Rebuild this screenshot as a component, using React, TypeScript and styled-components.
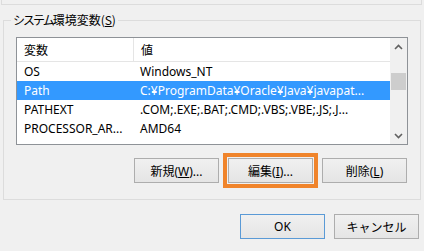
import React from 'react'
import styled, { createGlobalStyle } from 'styled-components'

const GlobalStyle = createGlobalStyle`
  html, body {
    margin: 0;
    padding: 0;
    background: #f0f0f0;
  }
  body {
    font-family: "Noto Sans", "Noto Sans CJK JP", sans-serif;
    font-size: 12px;
    color: #000;
  }
`

const Dialog = styled.div`
  width: 424px;
  height: 251px;
  overflow: hidden;
  background: #f0f0f0;
`

const TopFrame = styled.div`
  height: 4px;
  margin: 0 2px 0 1px;
  border: 1px solid #dcdcdc;
  border-top: none;
`

const GroupBox = styled.fieldset`
  margin: 7px 3px 0;
  padding: 9px 12px 16px;
  border: 1px solid #dcdcdc;
  min-width: 0;
`

const Legend = styled.legend`
  margin-left: -5px;
  padding: 0 2px;
  line-height: 16px;
  font-family: "Noto Sans CJK JP", sans-serif;
`

// Meiryo UI draws kana narrower than kanji
const Kana = styled.span`
  letter-spacing: -2px;
`

const ListBox = styled.div`
  height: 108px;
  box-sizing: border-box;
  border: 1px solid #8e9297;
  background: #fff;
  display: flex;
  overflow: hidden;
`

const ListBody = styled.div`
  flex: 1;
  display: flex;
  flex-direction: column;
  min-width: 0;
`

const Header = styled.div`
  display: flex;
  height: 24px;
  box-sizing: border-box;
  border-bottom: 1px solid #e5e5e5;
`

const HeaderCell = styled.div<{ $width?: number }>`
  ${({ $width }) => ($width ? `width: ${$width}px; border-right: 1px solid #e5e5e5;` : 'flex: 1;')}
  box-sizing: border-box;
  padding-left: 7px;
  line-height: 23px;
  font-family: "Noto Sans CJK JP", sans-serif;
`

const Row = styled.div<{ $selected?: boolean }>`
  display: flex;
  height: 19px;
  flex-shrink: 0;
  align-items: center;
  white-space: nowrap;
  background: ${({ $selected }) => ($selected ? '#3399ff' : 'transparent')};
  color: ${({ $selected }) => ($selected ? '#fff' : '#000')};
`

const NameCell = styled.div`
  width: 117px;
  box-sizing: border-box;
  padding-left: 7px;
  overflow: hidden;
`

const ValueCell = styled.div`
  flex: 1;
  padding-left: 6px;
  overflow: hidden;
`

const ScrollBar = styled.div`
  width: 17px;
  background: #f0f0f0;
  display: flex;
  flex-direction: column;
`

const ArrowBox = styled.div`
  height: 17px;
  display: flex;
  align-items: center;
  justify-content: center;
`

const Track = styled.div`
  flex: 1;
`

const Thumb = styled.div<{ $offset: number }>`
  margin: ${({ $offset }) => $offset}px 1px 0;
  height: 17px;
  background: #cdcdcd;
`

const ButtonRow = styled.div`
  display: flex;
  justify-content: flex-end;
  gap: 9px;
  margin-top: 13px;
  padding-right: 1px;
`

const DialogButtons = styled.div`
  display: flex;
  justify-content: flex-end;
  gap: 9px;
  margin: 14px 5px 0 0;
`

const Button = styled.button<{ $default?: boolean; $marked?: boolean }>`
  width: 85px;
  height: 25px;
  box-sizing: border-box;
  padding: 0;
  border: 1px solid ${({ $default }) => ($default ? '#5a9ad6' : '#adadad')};
  background: linear-gradient(#f0f0f0, #e5e5e5);
  font-family: "Noto Sans", "Noto Sans CJK JP", sans-serif;
  font-size: 12px;
  color: #000;
  ${({ $marked }) => ($marked ? 'outline: 4px solid #f0842b; outline-offset: 1px;' : '')}
`

const Chevron = ({ up }: { up?: boolean }) => (
  <svg width="9" height="6" viewBox="0 0 9 6">
    <polyline
      points={up ? '1,5 4.5,1.5 8,5' : '1,1 4.5,4.5 8,1'}
      fill="none"
      stroke="#606060"
      strokeWidth="1.6"
    />
  </svg>
)

const rows = [
  { name: 'OS', value: 'Windows_NT' },
  { name: 'Path', value: 'C:¥ProgramData¥Oracle¥Java¥javapat...', selected: true },
  { name: 'PATHEXT', value: '.COM;.EXE;.BAT;.CMD;.VBS;.VBE;.JS;.J...' },
  { name: 'PROCESSOR_AR...', value: 'AMD64' },
]

export default function App() {
  return (
    <Dialog>
      <GlobalStyle />
      <TopFrame />
      <GroupBox>
        <Legend>
          <Kana>システム</Kana>環境変数(<u>S</u>)
        </Legend>
        <ListBox>
          <ListBody>
            <Header>
              <HeaderCell $width={117}>変数</HeaderCell>
              <HeaderCell>値</HeaderCell>
            </Header>
            {rows.map((r) => (
              <Row key={r.name} $selected={r.selected}>
                <NameCell>{r.name}</NameCell>
                <ValueCell>{r.value}</ValueCell>
              </Row>
            ))}
          </ListBody>
          <ScrollBar>
            <ArrowBox>
              <Chevron up />
            </ArrowBox>
            <Track>
              <Thumb $offset={18} />
            </Track>
            <ArrowBox>
              <Chevron />
            </ArrowBox>
          </ScrollBar>
        </ListBox>
        <ButtonRow>
          <Button>
            新規(<u>W</u>)...
          </Button>
          <Button $marked>
            編集(<u>I</u>)...
          </Button>
          <Button>
            削除(<u>L</u>)
          </Button>
        </ButtonRow>
      </GroupBox>
      <DialogButtons>
        <Button $default>OK</Button>
        <Button>キャンセル</Button>
      </DialogButtons>
    </Dialog>
  )
}
